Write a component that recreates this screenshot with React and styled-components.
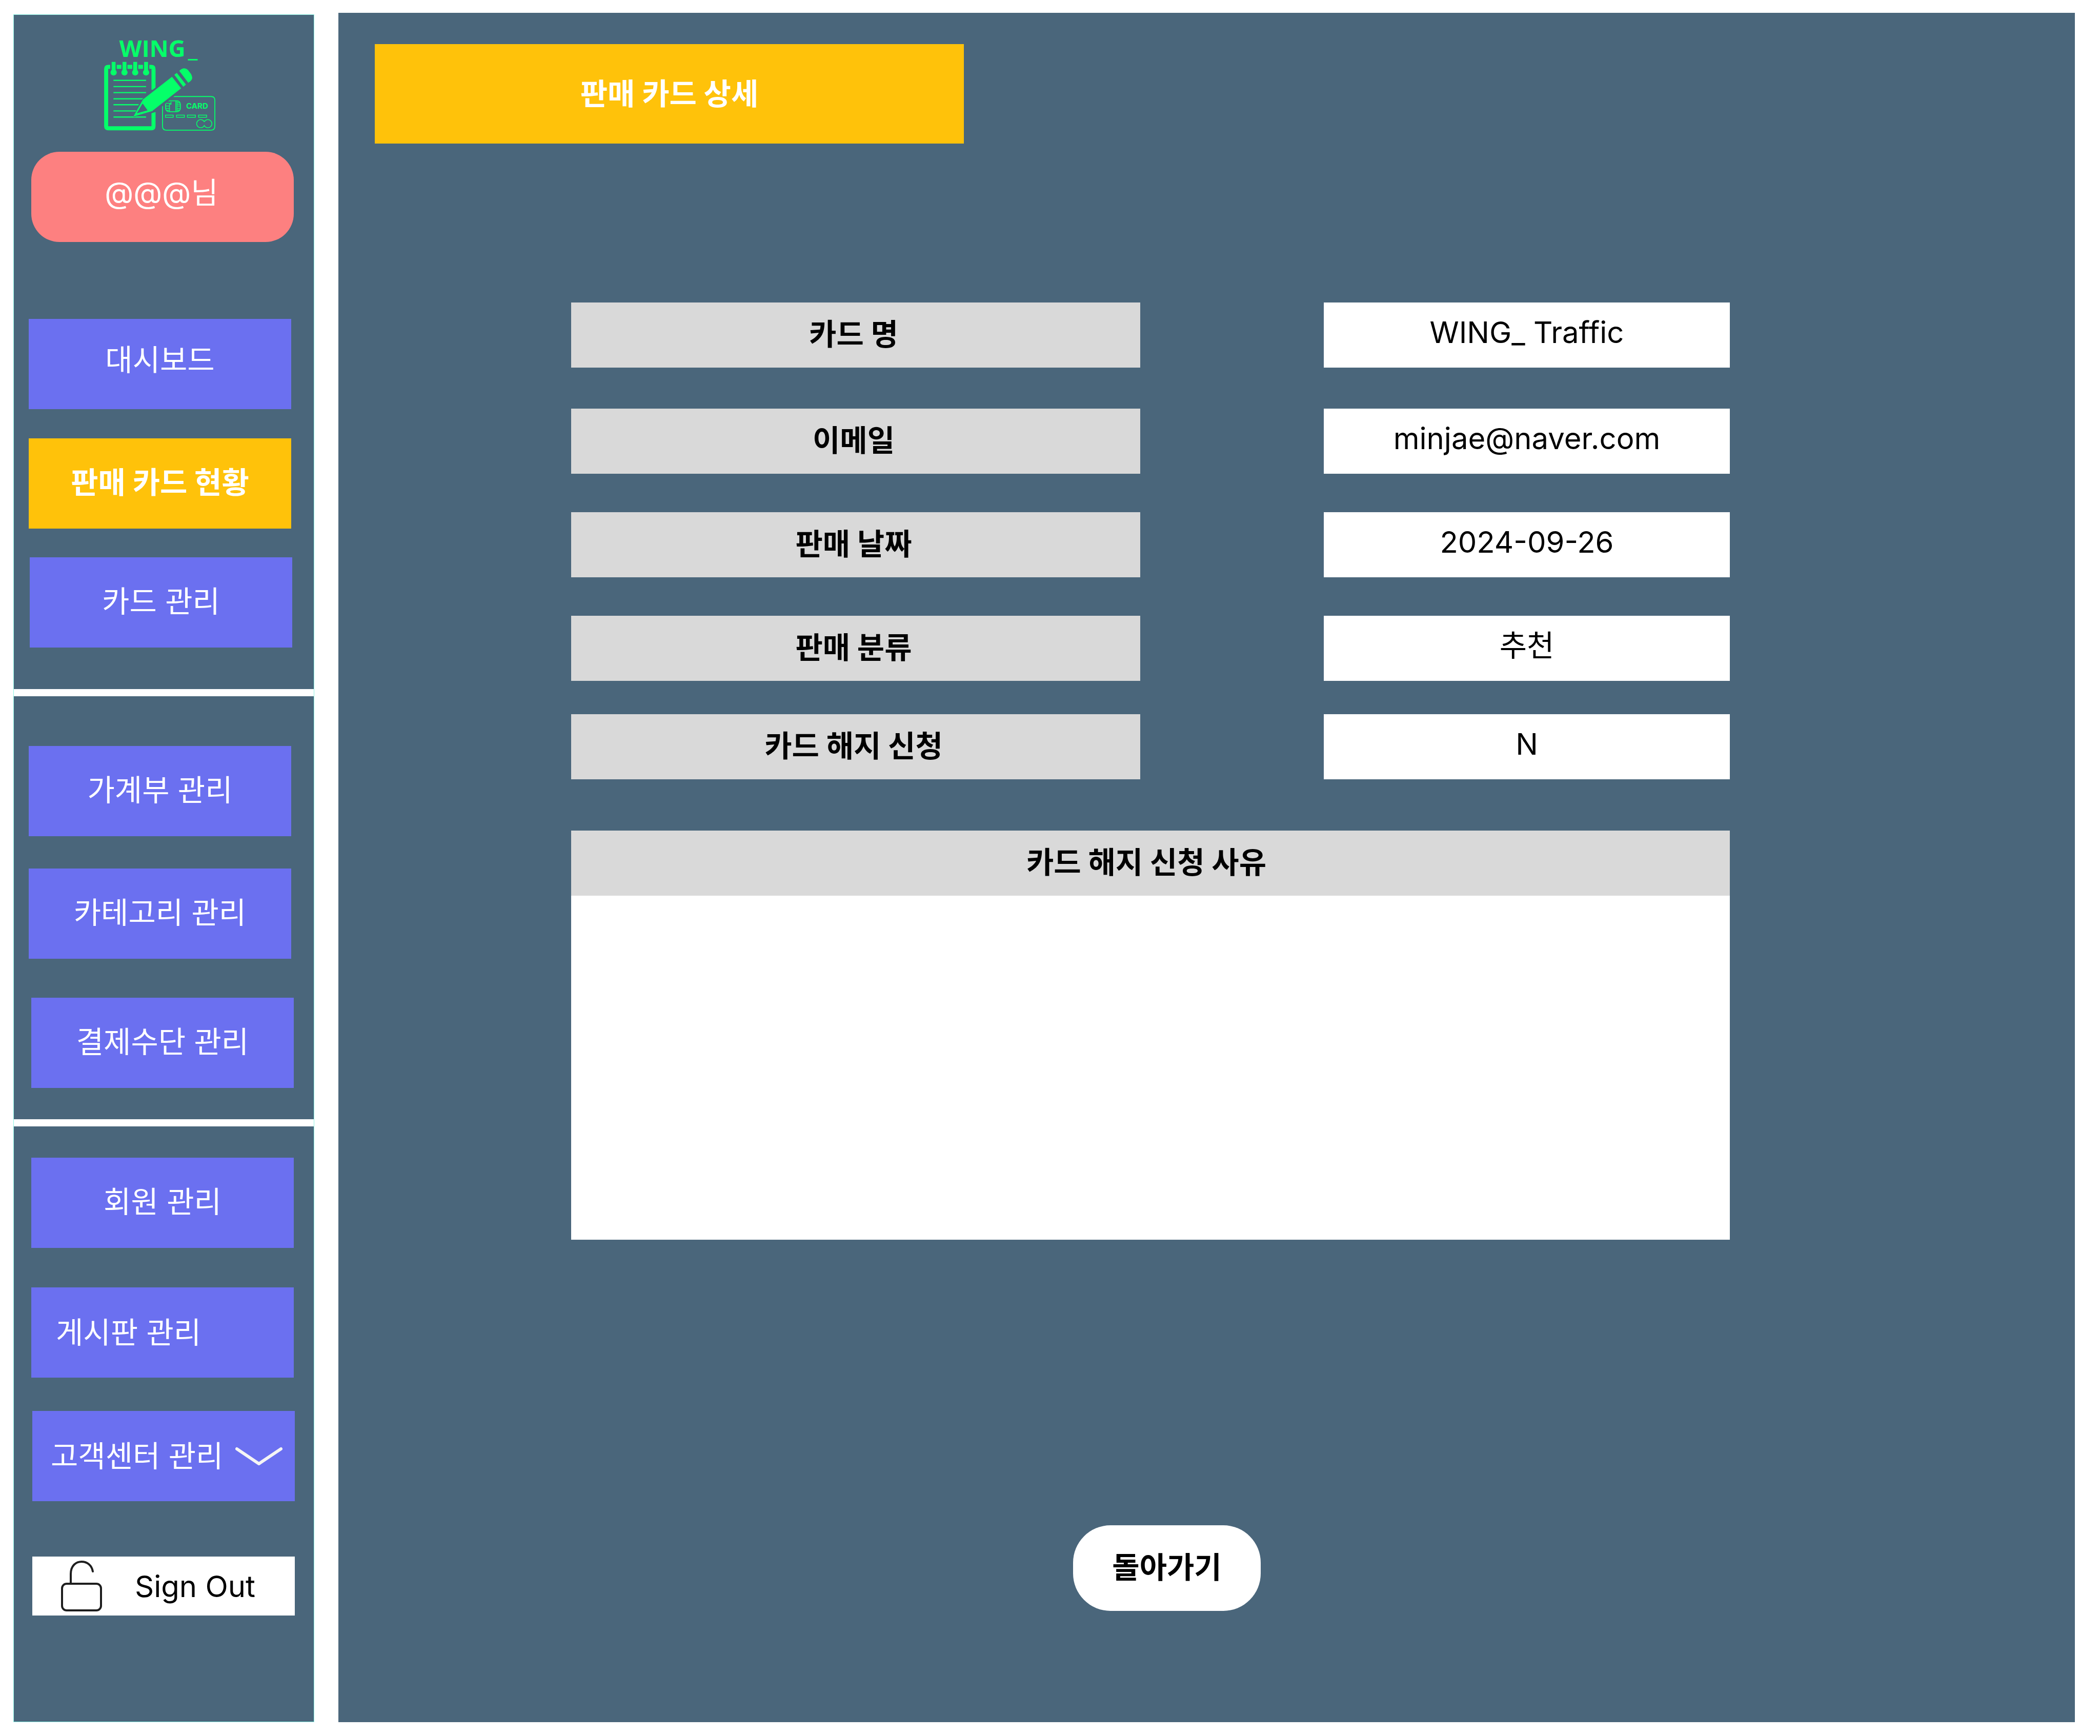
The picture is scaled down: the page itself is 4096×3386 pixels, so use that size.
import React from 'react';
import styled, { createGlobalStyle } from 'styled-components';

const color = {
  slate: '#4a667b',
  indigo: '#6b70f0',
  amber: '#ffc20a',
  coral: '#fd8080',
  mint: '#05ff69',
  grey: '#d9d9d9',
  edge: '#8ff5e6',
};

const GlobalStyle = createGlobalStyle`
  *, *::before, *::after { box-sizing: border-box; }
  body {
    margin: 0;
    background: #fff;
    color: #000;
    font-family: Inter, 'Noto Sans CJK KR', sans-serif;
    font-size: 58px;
    line-height: 70px;
  }
`;

const Page = styled.div`
  display: flex;
  gap: 47px;
  min-height: 100vh;
  padding: 25px 49px 27px 26px;
`;

const Sidebar = styled.aside`
  display: flex;
  flex-direction: column;
  flex: 0 0 587px;
  gap: 14px;
  margin-top: 3px;
  border: 1px solid ${color.edge};
`;

const Section = styled.nav`
  display: flex;
  flex-direction: column;
  align-items: flex-start;
  flex-grow: ${(p) => (p.$fill ? 1 : 0)};
  padding: ${(p) => p.$top}px 0 ${(p) => p.$bottom}px;
  background: ${color.slate};
`;

const Logo = styled.svg`
  display: block;
  width: 273px;
  height: 218px;
  margin-left: 155px;
`;

const Block = styled.div`
  display: flex;
  align-items: center;
  justify-content: center;
  width: 512px;
  height: 176px;
  margin: ${(p) => p.$gap || 0}px 0 0 ${(p) => p.$indent}px;
  border: 0;
  color: #fff;
  font: inherit;
  text-decoration: none;
  white-space: nowrap;
`;

const UserBadge = styled(Block)`
  padding: 0 4px 16px 0;
  border-radius: 55px;
  background: ${color.coral};
`;

const NavLink = styled(Block)`
  padding-bottom: ${(p) => (p.$raised ? 16 : 4)}px;
  background: ${(p) => (p.$active ? color.amber : color.indigo)};
  font-weight: ${(p) => (p.$active ? 700 : 400)};
`;

const StartLink = styled(Block)`
  justify-content: flex-start;
  padding: 0 0 0 ${(p) => p.$inset}px;
  background: ${color.indigo};
  cursor: pointer;
`;

const Chevron = styled.svg`
  width: 92px;
  height: 37px;
  margin-left: 24px;
`;

const SignOut = styled(Block)`
  justify-content: flex-start;
  gap: 64px;
  height: 115px;
  padding: 0 0 0 56px;
  background: #fff;
  color: #000;
  cursor: pointer;
`;

const LockIcon = styled.svg`
  width: 80px;
  height: 99px;
`;

const Main = styled.main`
  display: flex;
  flex-direction: column;
  flex: 1;
  min-width: 0;
  padding: 61px 71px 0;
  background: ${color.slate};
`;

const Title = styled.h1`
  display: flex;
  align-items: center;
  justify-content: center;
  width: 1149px;
  height: 194px;
  margin: 0;
  background: ${color.amber};
  color: #fff;
  font-size: 58px;
  font-weight: 700;
`;

const Detail = styled.section`
  margin: 310px 602px 0 383px;
`;

const Fields = styled.dl`
  margin: 0;
`;

const Field = styled.div`
  display: grid;
  grid-template-columns: 1110fr 792fr;
  column-gap: 358px;
  margin-bottom: ${(p) => p.$after}px;
`;

const Term = styled.dt`
  display: flex;
  align-items: center;
  justify-content: center;
  height: 127px;
  padding: 0 8px 4px 0;
  background: ${color.grey};
  font-weight: 700;
`;

const Value = styled.dd`
  display: flex;
  align-items: center;
  justify-content: center;
  height: 127px;
  margin: 0;
  padding-bottom: 12px;
  background: #fff;
`;

const ReasonLabel = styled(Term).attrs({ as: 'label' })`
  padding-right: 16px;
`;

const Reason = styled.textarea`
  display: block;
  width: 100%;
  height: 671px;
  padding: 32px;
  border: 0;
  outline: 0;
  resize: none;
  background: #fff;
  font: inherit;
`;

const Footer = styled.footer`
  display: flex;
  justify-content: center;
  margin: 557px 538px 0 383px;
`;

const BackButton = styled.button`
  width: 366px;
  height: 167px;
  padding: 0 0 4px;
  border: 0;
  border-radius: 73px;
  background: #fff;
  color: #000;
  font: inherit;
  font-weight: 700;
  cursor: pointer;
`;

function WingLogo() {
  return (
    <Logo viewBox="0 0 900 720" role="img" aria-label="WING_ CARD" fill="none" stroke={color.mint}>
      <g fill={color.mint} stroke="none" fontFamily="'Open Sans', sans-serif" fontWeight="700">
        <text x="167" y="184" fontSize="150">WING<tspan x="609">_</tspan></text>
        <text x="597" y="520" fontSize="50" fontFamily="Inter, sans-serif">CARD</text>
      </g>
      {/* notepad */}
      <path
        d="M108 249H96Q82 249 82 263V631Q82 645 96 645H373Q387 645 387 631V538M387 396V263Q387 249 373 249H360M150 249H180M219 249H250M289 249H319"
        strokeWidth="26"
      />
      <path d="M130 217V285M200 217V285M269 217V285M339 217V285" strokeWidth="25" />
      <g fill={color.mint} stroke="none">
        <circle cx="130" cy="285" r="20" />
        <circle cx="200" cy="285" r="20" />
        <circle cx="269" cy="285" r="20" />
        <circle cx="339" cy="285" r="20" />
      </g>
      <path
        d="M129 336H339M129 376H339M129 415H339M129 455H339M129 493H305M129 533H290M129 572H339"
        strokeWidth="8"
      />
      {/* payment card */}
      <path
        d="M498 440H758Q782 440 782 464V632Q782 657 758 657H469Q445 657 445 632V485"
        strokeWidth="6"
      />
      <rect x="465" y="468" width="95" height="70" rx="22" strokeWidth="6" />
      <path
        d="M490 538V490H500V474M530 468V538M538 468V538M465 484H498M465 501H490M465 517H490M470 529H490M538 480H557M538 490H560M538 501H560M538 517H560M538 528H557"
        strokeWidth="5"
      />
      <path d="M464 560H514V574H464ZM535 560H586V574H535ZM605 560H657V574H605ZM677 560H729V574H677Z" strokeWidth="5" />
      <path d="M714 603A26 26 0 1 0 714 627A26 26 0 1 0 714 603" strokeWidth="5" />
      {/* pencil */}
      <path d="M380 398L506 298L580 388L400 540L372 548L258 572L300 470Z" fill={color.slate} stroke="none" />
      <path d="M318 460L506 313L565 387L384 529L350 533L316 487Z" fill={color.mint} stroke="none" />
      <path d="M320 463L263 565L382 530L350 527L275 550L318 478" fill={color.mint} strokeWidth="5" />
      <path d="M318 486L280 548L349 529Z" fill={color.slate} stroke="none" />
      <path d="M521 300L537 288L596 363L579 377Z" fill={color.mint} stroke="none" />
      <path d="M553 275Q582 246 608 268L628 294Q645 323 627 339L611 352Z" fill={color.mint} stroke="none" />
    </Logo>
  );
}

const fields = [
  { term: '카드 명', value: 'WING_ Traffic', after: 80 },
  { term: '이메일', value: 'minjae@naver.com', after: 75 },
  { term: '판매 날짜', value: '2024-09-26', after: 75 },
  { term: '판매 분류', value: '추천', after: 65 },
  { term: '카드 해지 신청', value: 'N', after: 100 },
];

export default function App() {
  return (
    <>
      <GlobalStyle />
      <Page>
        <Sidebar>
          <Section $top={26} $bottom={81}>
            <WingLogo />
            <UserBadge $gap={23} $indent={34}>@@@님</UserBadge>
            <NavLink as="a" href="#dashboard" $gap={150} $indent={29} $raised>대시보드</NavLink>
            <NavLink as="a" href="#sales" $gap={57} $indent={29} $active aria-current="page">판매 카드 현황</NavLink>
            <NavLink as="a" href="#cards" $gap={56} $indent={31}>카드 관리</NavLink>
          </Section>
          <Section $top={97} $bottom={61}>
            <NavLink as="a" href="#ledger" $indent={29}>가계부 관리</NavLink>
            <NavLink as="a" href="#categories" $gap={63} $indent={29}>카테고리 관리</NavLink>
            <NavLink as="a" href="#payments" $gap={76} $indent={34}>결제수단 관리</NavLink>
          </Section>
          <Section $top={61} $bottom={61} $fill>
            <NavLink as="a" href="#members" $indent={34}>회원 관리</NavLink>
            <StartLink as="a" href="#boards" $gap={77} $indent={34} $inset={48}>게시판 관리</StartLink>
            <StartLink as="button" type="button" aria-expanded="false" $gap={65} $indent={36} $inset={36}>
              고객센터 관리
              <Chevron viewBox="0 0 92 37" fill="none" stroke="#f5f5f5" strokeWidth="6" strokeLinecap="round" strokeLinejoin="round" aria-hidden="true">
                <path d="M3 4L46 33L89 4" />
              </Chevron>
            </StartLink>
            <SignOut as="button" type="button" $gap={108} $indent={36}>
              <LockIcon viewBox="0 0 80 99" fill="none" stroke="#1e1e1e" strokeWidth="4" strokeLinecap="round" aria-hidden="true">
                <rect x="2" y="45" width="76" height="52" rx="9" />
                <path d="M19 45V26C19 10 29 2 40 2C51 2 60 9 62 21" />
              </LockIcon>
              Sign Out
            </SignOut>
          </Section>
        </Sidebar>
        <Main>
          <Title>판매 카드 상세</Title>
          <Detail>
            <Fields>
              {fields.map((f) => (
                <Field key={f.term} $after={f.after}>
                  <Term>{f.term}</Term>
                  <Value>{f.value}</Value>
                </Field>
              ))}
            </Fields>
            <ReasonLabel htmlFor="reason">카드 해지 신청 사유</ReasonLabel>
            <Reason id="reason" readOnly />
          </Detail>
          <Footer>
            <BackButton type="button">돌아가기</BackButton>
          </Footer>
        </Main>
      </Page>
    </>
  );
}
